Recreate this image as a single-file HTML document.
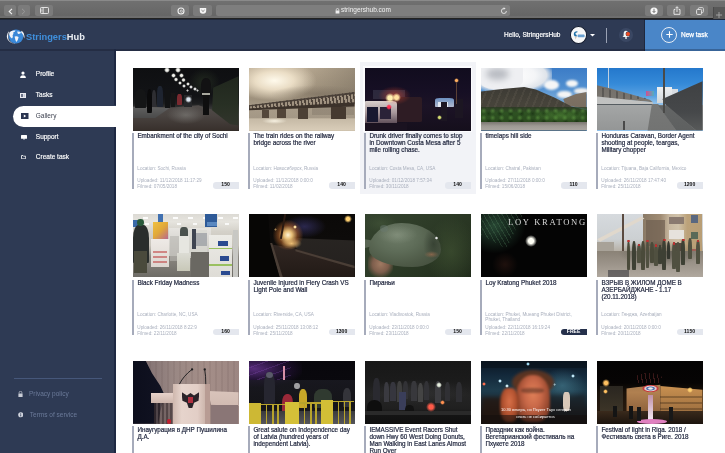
<!DOCTYPE html>
<html><head><meta charset="utf-8"><style>
*{margin:0;padding:0;box-sizing:border-box}
html,body{width:725px;height:453px;overflow:hidden;background:#fff;font-family:"Liberation Sans",sans-serif;position:relative}
div,span{position:absolute}
#tb{will-change:transform;left:0;top:0;width:725px;height:19px;background:linear-gradient(180deg,#707070,#666 85%,#6e6e6e 92%);border-top:1px solid #8a8a8a;border-bottom:1.3px solid #222}
.tbb{background:#7b7b7b;border-radius:2px;height:11px;top:3.9px}
#hdr{will-change:transform;left:0;top:19px;width:725px;height:31.6px;background:#2e3a54;border-top:1px solid #1e273a}
#side{will-change:transform;left:0;top:50px;width:116px;height:403px;background:#2e3a54}
#content{left:116px;top:50.6px;width:609px;height:403px;background:#fff}
.img{width:105.5px;height:63px;background:#333;overflow:hidden}
.hov{width:115.5px;height:131.5px;background:#f2f3f7}
.bl{width:1.6px;height:55.5px;background:#a6abbb}
.ti{width:110px;white-space:nowrap;font-weight:normal;font-size:6.3px;line-height:7px;color:#22283f;-webkit-text-stroke:0.2px #22283f}
.lo{width:110px;white-space:nowrap;font-size:4.65px;line-height:4.7px;color:#a9afbd}
.up{width:80px;font-size:4.65px;line-height:5.5px;color:#a9afbd}
.bd{width:26px;height:6.5px;background:#e4e7ee;border-radius:3.2px 0 0 3.2px;font-size:5.1px;line-height:5.6px;font-weight:bold;text-align:center;color:#111;padding-left:0}
.bd.free{background:#25304b;color:#fff}
.mi{left:35.8px;font-size:6.5px;color:#fff;line-height:8px;-webkit-text-stroke:0.15px currentColor}
#cards{left:0;top:0;width:725px;height:453px;will-change:transform}

</style></head><body>
<div id="tb">
 <div class="tbb" style="left:4.1px;width:12px"></div>
 <svg style="position:absolute;left:8px;top:6.5px" width="5" height="7" viewBox="0 0 5 7"><path d="M4 0.8 L1.2 3.5 L4 6.2" fill="none" stroke="#f4f4f4" stroke-width="1.1"/></svg>
 <div class="tbb" style="left:17.6px;width:12px"></div>
 <svg style="position:absolute;left:21.3px;top:6.5px" width="5" height="7" viewBox="0 0 5 7"><path d="M1 0.8 L3.8 3.5 L1 6.2" fill="none" stroke="#9a9a9a" stroke-width="1"/></svg>
 <div class="tbb" style="left:34.9px;width:18px"></div>
 <svg style="position:absolute;left:39.5px;top:6.3px" width="9" height="7" viewBox="0 0 9 7"><rect x="0.5" y="0.5" width="8" height="6" rx="0.8" fill="none" stroke="#eee" stroke-width="0.9"/><line x1="3.2" y1="0.5" x2="3.2" y2="6.5" stroke="#eee" stroke-width="0.8"/><line x1="1" y1="2.2" x2="2.8" y2="2.2" stroke="#ddd" stroke-width="0.5"/><line x1="1" y1="3.5" x2="2.8" y2="3.5" stroke="#ddd" stroke-width="0.5"/><line x1="1" y1="4.8" x2="2.8" y2="4.8" stroke="#ddd" stroke-width="0.5"/></svg>
 <div class="tbb" style="left:170.7px;width:18.5px"></div>
 <svg style="position:absolute;left:176.5px;top:6px" width="8" height="8" viewBox="0 0 8 8"><circle cx="4" cy="4" r="3" fill="none" stroke="#f0f0f0" stroke-width="1.1"/><circle cx="4.3" cy="4.2" r="1.1" fill="none" stroke="#f0f0f0" stroke-width="0.7"/></svg>
 <div class="tbb" style="left:193.1px;width:18.8px"></div>
 <svg style="position:absolute;left:198.5px;top:6px" width="8" height="8" viewBox="0 0 8 8"><path d="M0.8 1 H7.2 V3.5 A3.2 3.2 0 0 1 0.8 3.5 Z" fill="#f4f4f4"/><path d="M2.4 3 L4 4.5 L5.6 3" fill="none" stroke="#7b7b7b" stroke-width="0.9"/></svg>
 <div class="tbb" style="left:216px;width:294px;background:#7e7e7e"></div>
 <svg style="position:absolute;left:334.5px;top:6.5px" width="5" height="6" viewBox="0 0 5 6"><path d="M1.2 2.6 V1.8 A1.3 1.3 0 0 1 3.8 1.8 V2.6" fill="none" stroke="#eee" stroke-width="0.7"/><rect x="0.6" y="2.5" width="3.8" height="3" fill="#eee"/></svg>
 <div style="left:341px;top:2.8px;font-size:6.5px;line-height:11px;color:#f2f2f2">stringershub.com</div>
 <svg style="position:absolute;left:500px;top:5.8px" width="8" height="8" viewBox="0 0 8 8"><path d="M6.4 4 A2.5 2.5 0 1 1 4 1.5" fill="none" stroke="#e8e8e8" stroke-width="0.9"/><path d="M3.6 0.2 L5.6 1.5 L3.6 2.8 Z" fill="#e8e8e8"/></svg>
 <div class="tbb" style="left:644.5px;width:18.5px"></div>
 <svg style="position:absolute;left:649.8px;top:5.8px" width="8" height="8" viewBox="0 0 8 8"><circle cx="4" cy="4" r="3.6" fill="#f6f6f6"/><path d="M4 1.8 V5.2 M2.6 4 L4 5.6 L5.4 4" fill="none" stroke="#6a6a6a" stroke-width="0.9"/></svg>
 <div class="tbb" style="left:667.2px;width:18.3px"></div>
 <svg style="position:absolute;left:672.5px;top:5px" width="8" height="9" viewBox="0 0 8 9"><path d="M2.3 3.5 H1 V8.3 H7 V3.5 H5.7" fill="none" stroke="#eee" stroke-width="0.9"/><path d="M4 6 V0.8 M2.4 2.3 L4 0.7 L5.6 2.3" fill="none" stroke="#eee" stroke-width="0.9"/></svg>
 <div class="tbb" style="left:690.2px;width:18px"></div>
 <svg style="position:absolute;left:695.5px;top:5.8px" width="8" height="8" viewBox="0 0 8 8"><rect x="2.4" y="0.6" width="5" height="5" rx="1" fill="none" stroke="#ddd" stroke-width="0.9"/><rect x="0.6" y="2.4" width="5" height="5" rx="1" fill="#7b7b7b" stroke="#eee" stroke-width="0.9"/></svg>
 <div style="left:712.7px;top:5.7px;width:13px;height:12.5px;background:#585858;border-left:1px solid #4a4a4a"></div>
 <svg style="position:absolute;left:716px;top:10.5px" width="6" height="6" viewBox="0 0 6 6"><path d="M3 0 V6 M0 3 H6" stroke="#a8a8a8" stroke-width="0.9"/></svg>
</div>
<div id="hdr">
 <svg style="position:absolute;left:5.5px;top:8.6px" width="19" height="15" viewBox="0 0 19 15">
  <ellipse cx="10" cy="7.5" rx="7.3" ry="6.9" fill="#3a88d8"/>
  <path d="M3.5 3.2 Q6 0.8 9.5 1.6 Q9 3.2 7.2 3.6 Q8 5 6.6 6.2 Q7.4 8 6 9.6 Q4.2 8.6 3.6 6.6 Q2.8 4.8 3.5 3.2 Z" fill="#f2f4f8"/>
  <path d="M8.6 7.6 Q10.8 6.6 12.6 8 Q12.2 11 10.4 13 Q9.2 11.6 8.6 7.6 Z" fill="#f2f4f8"/>
  <path d="M11.2 2.6 Q13.6 2.2 15.2 3.8 Q13.6 5.4 11.8 4.8 Z" fill="#f2f4f8"/>
  <path d="M1.6 10.5 Q-0.6 5.5 3.2 2 Q1.6 6 2.6 10.8 Q5 14.2 9.5 14.6 Q4.6 15 1.6 10.5 Z" fill="#f2f4f8"/>
  <path d="M15.8 1.8 Q19.4 4.6 18.2 9.6 Q17.8 5.8 15 3 Z" fill="#f2f4f8"/>
 </svg>
 <div style="left:26px;top:10.5px;font-size:9.3px;font-weight:bold;line-height:12px;color:#3f8fdc">Stringers<span style="position:static;color:#e9edf2">Hub</span></div>
 <div style="left:504px;top:10.5px;font-size:6.5px;line-height:8px;color:#fff;-webkit-text-stroke:0.2px #fff">Hello, StringersHub</div>
 <div style="left:569.9px;top:6.4px;width:16.8px;height:17.2px;border-radius:50%;background:#f8f8f8;border:1.6px solid #141c2e"></div>
 <svg style="position:absolute;left:572px;top:9.5px" width="13" height="11" viewBox="0 0 13 11"><path d="M5.5 1.2 Q2 1 1.8 4 Q1.8 6.5 4.5 6.8 L4.8 5 Q3.3 4.8 3.4 3.6 Q3.6 2.4 5.2 2.6 Z" fill="#1f70a8"/><path d="M2.5 6.5 L4.8 6.8 L3.6 9.5 Z" fill="#d8c8b8"/><rect x="5.6" y="4.6" width="7" height="2.6" rx="0.8" fill="#6aa0d0"/></svg>
 <svg style="position:absolute;left:589.8px;top:14.20px" width="5" height="3" viewBox="0 0 5 3"><path d="M0 0 H5 L2.5 2.5 Z" fill="#fff"/></svg>
 <div style="left:605.7px;top:7.60px;width:1.2px;height:15px;background:#9aa2b4"></div>
 <div style="left:618.8px;top:7.70px;width:14.5px;height:14.5px;border-radius:50%;background:#3a4763"></div>
 <svg style="position:absolute;left:621.8px;top:10.30px" width="8" height="9" viewBox="0 0 8 9"><path d="M4 0.8 Q6.3 0.8 6.3 3.5 L6.5 6 L7.5 7 H0.5 L1.5 6 L1.7 3.5 Q1.7 0.8 4 0.8 Z" fill="#f4f4f4"/><circle cx="4" cy="8" r="0.9" fill="#f4f4f4"/></svg>
 <div style="left:626.1px;top:11.7px;width:4.1px;height:4.1px;border-radius:50%;background:#ee4a22;box-shadow:0 0 0 0.4px #2e3a54"></div>
 <div style="left:645.4px;top:0px;width:80px;height:31.6px;background:#4a86c8"></div>
 <div style="left:661px;top:6.70px;width:16px;height:16px;border-radius:50%;border:1px solid #e8eef6"></div>
 <svg style="position:absolute;left:665.5px;top:11.20px" width="7" height="7" viewBox="0 0 7 7"><path d="M3.5 0.3 V6.7 M0.3 3.5 H6.7" stroke="#fff" stroke-width="1.1"/></svg>
 <div style="left:681px;top:11.2px;font-size:6.5px;line-height:8px;color:#fff;-webkit-text-stroke:0.25px #fff">New task</div>
</div>
<div id="side">
 <div style="left:13.4px;top:55.6px;width:103px;height:21px;background:#fff;border-radius:10.5px 0 0 10.5px"></div>
 <svg style="position:absolute;left:20.3px;top:20.8px" width="6" height="7" viewBox="0 0 6 7"><circle cx="3" cy="2.1" r="1.6" fill="#fff"/><path d="M0.2 7 V6 Q0.5 4.2 3 4.2 Q5.5 4.2 5.8 6 V7 Z" fill="#fff"/></svg>
 <svg style="position:absolute;left:20px;top:43px" width="6" height="5" viewBox="0 0 6 5"><rect x="0" y="0" width="6" height="5" fill="#e8e8ee"/><rect x="1" y="1" width="2" height="3" fill="#6a7288"/><rect x="3.6" y="1" width="1.4" height="3" fill="#c8ccd6"/></svg>
 <div class="mi" style="top:20px">Profile</div>
 <div class="mi" style="top:41px">Tasks</div>
 <svg style="position:absolute;left:20.9px;top:62.9px" width="8" height="6" viewBox="0 0 8 6"><rect x="0" y="0" width="7.5" height="6" fill="#2a3450"/><path d="M2.8 1.6 L5.2 3 L2.8 4.4 Z" fill="#fff"/></svg>
 <div class="mi" style="top:62px;color:#3a3f4d;-webkit-text-stroke:0">Gallery</div>
 <svg style="position:absolute;left:20.5px;top:84.6px" width="6" height="5" viewBox="0 0 6 5"><rect x="0" y="0" width="6" height="3.8" rx="0.5" fill="#fff"/><path d="M2 3.5 L3 5 L4 3.5 Z" fill="#fff"/></svg>
 <div class="mi" style="top:82.6px">Support</div>
 <svg style="position:absolute;left:20.9px;top:105.2px" width="5" height="4" viewBox="0 0 5 4"><path d="M0.5 0.5 L2 0.5 L2.5 1.2 H4.6 V3.8 H0.5 Z" fill="none" stroke="#fff" stroke-width="0.8"/></svg>
 <div class="mi" style="top:103.4px">Create task</div>
 <div style="left:13.6px;top:327.5px;width:88.7px;height:1px;background:#46577a"></div>
 <svg style="position:absolute;left:17.9px;top:341.3px" width="5" height="6" viewBox="0 0 5 6"><path d="M1.1 2.6 V1.7 A1.4 1.4 0 0 1 3.9 1.7 V2.6" fill="none" stroke="#c8ccd6" stroke-width="0.7"/><rect x="0.4" y="2.5" width="4.2" height="3.4" rx="0.5" fill="#c8ccd6"/></svg>
 <div style="left:29px;top:340px;font-size:6.5px;line-height:8px;color:#6b7a99">Privacy policy</div>
 <svg style="position:absolute;left:17.9px;top:362px" width="5.5" height="5.5" viewBox="0 0 6 6"><circle cx="3" cy="3" r="2.8" fill="#d0d4de"/><rect x="2.55" y="2.5" width="0.9" height="2.3" fill="#2e3a54"/><circle cx="3" cy="1.6" r="0.5" fill="#2e3a54"/></svg>
 <div style="left:29.8px;top:361px;font-size:6.5px;line-height:8px;color:#6b7a99">Terms of service</div>
</div>
<div id="content"></div>
<div style="left:0;top:48.6px;width:725px;height:2px;background:rgba(10,15,30,.28)"></div>
<div style="left:644.4px;top:19px;width:1px;height:31.6px;background:rgba(10,15,30,.4)"></div>
<div style="left:114.1px;top:49.3px;width:1.9px;height:56px;background:#1e2842"></div>
<div style="left:114.1px;top:127px;width:1.9px;height:326px;background:#1e2842"></div>

<div id="cards">
<div class="img" style="left:133px;top:67.5px;background:linear-gradient(180deg,#0e0f11 0%,#121316 45%,#1c1d1e 56%,#333 63%,#484746 74%,#403c3a 88%,#2e2926 100%)"><div style="left:52%;top:0%;width:30%;height:45%;background:radial-gradient(ellipse,rgba(40,50,35,.7),transparent 70%);"></div><div style="left:0;top:0;width:100%;height:100%;background:linear-gradient(180deg,#555555 0%,#5c5a58 35%,#4a4441 75%,#372f2b 100%);clip-path:polygon(0% 62%,35% 64%,62% 60%,100% 80%,100% 100%,0% 100%);"></div><div style="left:0%;top:62%;width:35%;height:18%;background:linear-gradient(180deg,#606060,#4a4a4a);clip-path:polygon(0% 0%,100% 10%,60% 100%,0% 100%)"></div><div style="left:30%;top:60%;width:40%;height:32%;background:radial-gradient(ellipse,rgba(150,150,146,.45),transparent 65%);"></div><div style="left:0;top:0;width:100%;height:100%;background:linear-gradient(180deg,#1e241c,#283024 60%,#34362e);clip-path:polygon(76% 32%,100% 14%,100% 92%,92% 90%,75% 68%);"></div><div style="left:2%;top:34%;width:10%;height:30%;background:#141516;border-radius:40% 40% 5% 5%"></div><div style="left:13%;top:34%;width:5%;height:38%;background:#0a0a0b;border-radius:40% 40% 10% 10%"></div><div style="left:18%;top:36%;width:4%;height:26%;background:#2e2e32;border-radius:40% 40% 10% 10%"></div><div style="left:23%;top:30%;width:5%;height:32%;background:#1e2430;border-radius:40% 40% 10% 10%"></div><div style="left:30%;top:36%;width:5%;height:28%;background:#121314;"></div><div style="left:36%;top:40%;width:4%;height:22%;background:#161616;"></div><div style="left:42%;top:42%;width:4%;height:18%;background:#7a2a30;border-radius:40% 40% 10% 10%"></div><div style="left:48%;top:44%;width:8%;height:18%;background:#262729;"></div><div style="left:calc(53% - 3.5px);top:calc(50% - 3.5px);width:7.0px;height:7.0px;border-radius:50%;background:radial-gradient(circle,#dce6f0 0,#dce6f0 30%,transparent 70%);"></div><div style="left:64%;top:17%;width:10%;height:28%;background:#121213;border-radius:40% 40% 5% 5%"></div><div style="left:65%;top:40%;width:8%;height:3.5%;background:#a8a89e;"></div><div style="left:66%;top:43%;width:6%;height:33%;background:#0f0f0f;"></div><div style="left:calc(32% - 3px);top:calc(4% - 3px);width:6px;height:6px;border-radius:50%;background:radial-gradient(circle,#f6f6f0 0,#f6f6f0 30%,transparent 70%);"></div><div style="left:calc(43% - 3px);top:calc(4% - 3px);width:6px;height:6px;border-radius:50%;background:radial-gradient(circle,#f6f6f0 0,#f6f6f0 30%,transparent 70%);"></div><div style="left:calc(38% - 2.5px);top:calc(12% - 2.5px);width:5.0px;height:5.0px;border-radius:50%;background:radial-gradient(circle,#f0f0ea 0,#f0f0ea 30%,transparent 70%);"></div><div style="left:calc(46% - 2.5px);top:calc(12% - 2.5px);width:5.0px;height:5.0px;border-radius:50%;background:radial-gradient(circle,#f0f0ea 0,#f0f0ea 30%,transparent 70%);"></div><div style="left:calc(41% - 2.2px);top:calc(19% - 2.2px);width:4.4px;height:4.4px;border-radius:50%;background:radial-gradient(circle,#ecece6 0,#ecece6 30%,transparent 70%);"></div><div style="left:calc(48% - 2.2px);top:calc(20% - 2.2px);width:4.4px;height:4.4px;border-radius:50%;background:radial-gradient(circle,#ecece6 0,#ecece6 30%,transparent 70%);"></div><div style="left:calc(45% - 2px);top:calc(25% - 2px);width:4px;height:4px;border-radius:50%;background:radial-gradient(circle,#e6e6e2 0,#e6e6e2 30%,transparent 70%);"></div><div style="left:calc(52% - 2px);top:calc(26% - 2px);width:4px;height:4px;border-radius:50%;background:radial-gradient(circle,#e6e6e2 0,#e6e6e2 30%,transparent 70%);"></div><div style="left:calc(48% - 2px);top:calc(30% - 2px);width:4px;height:4px;border-radius:50%;background:radial-gradient(circle,#ddd 0,#ddd 30%,transparent 70%);"></div><div style="left:calc(55% - 2px);top:calc(31% - 2px);width:4px;height:4px;border-radius:50%;background:radial-gradient(circle,#ddd 0,#ddd 30%,transparent 70%);"></div><div style="left:calc(59% - 1.8px);top:calc(34% - 1.8px);width:3.6px;height:3.6px;border-radius:50%;background:radial-gradient(circle,#ddd 0,#ddd 30%,transparent 70%);"></div><div style="left:calc(52% - 1.6px);top:calc(37% - 1.6px);width:3.2px;height:3.2px;border-radius:50%;background:radial-gradient(circle,#ccc 0,#ccc 30%,transparent 70%);"></div><div style="left:calc(61% - 1.6px);top:calc(36% - 1.6px);width:3.2px;height:3.2px;border-radius:50%;background:radial-gradient(circle,#ccc 0,#ccc 30%,transparent 70%);"></div></div>
<div class="bl" style="left:132.2px;top:133.0px"></div>
<div class="ti" style="left:137.4px;top:132.35px">Embankment of the city of Sochi</div>
<div class="lo" style="left:137.3px;top:166.5px">Location: Sochi, Russia</div>
<div class="up" style="left:137.3px;top:178.4px">Uploaded: 11/12/2018 11:17:29</div>
<div class="up" style="left:137.3px;top:183.9px">Filmed: 07/05/2018</div>
<div class="bd" style="left:212.6px;top:182.0px">150</div>
<div class="img" style="left:249px;top:67.5px;background:linear-gradient(180deg,#b8a992 0%,#a89a84 30%,#9e917d 50%,#a89b88 62%,#b8ac98 78%,#cfc3ae 100%)"><div style="left:0%;top:0%;width:100%;height:100%;background:radial-gradient(ellipse 40% 32% at 24% 20%,rgba(255,250,236,1) 0,rgba(245,232,208,.85) 45%,transparent 100%);"></div><div style="left:0%;top:0%;width:100%;height:60%;background:linear-gradient(90deg,transparent 50%,rgba(80,72,62,.3) 100%);"></div><div style="left:20%;top:28%;width:90%;height:28%;background:radial-gradient(ellipse,rgba(110,98,84,.45),transparent 70%);"></div><div style="left:60%;top:60%;width:40%;height:16%;background:linear-gradient(180deg,transparent,rgba(110,100,88,.6) 40%,rgba(120,110,96,.5));"></div><div style="left:0%;top:64%;width:100%;height:16%;background:linear-gradient(180deg,#a89c8a,#8e8272);opacity:.5"></div><div style="left:0;top:0;width:100%;height:100%;background:repeating-linear-gradient(80deg,#4e433a 0,#4e433a 1.5px,#a09280 1.5px,#a09280 3.5px);clip-path:polygon(0% 60%,100% 39%,100% 60%,0% 67%);"></div><div style="left:0;top:0;width:100%;height:100%;background:#4a4038;clip-path:polygon(0% 60%,100% 39%,100% 42%,0% 62%);"></div><div style="left:0;top:0;width:100%;height:100%;background:#3c322a;clip-path:polygon(0% 65%,100% 55%,100% 62%,0% 68%);"></div><div style="left:12%;top:67%;width:7%;height:13%;background:#54473a;"></div><div style="left:27%;top:66%;width:8%;height:14%;background:#524539;"></div><div style="left:46%;top:64%;width:10%;height:19%;background:#4c4035;"></div><div style="left:78%;top:62%;width:14%;height:25%;background:#463a30;"></div><div style="left:0%;top:82%;width:100%;height:18%;background:linear-gradient(180deg,#c6baa6,#d8ccb8);"></div><div style="left:12%;top:80%;width:24%;height:9%;background:radial-gradient(ellipse,rgba(255,250,235,.85),transparent 70%);"></div></div>
<div class="bl" style="left:248.2px;top:133.0px"></div>
<div class="ti" style="left:253.4px;top:132.35px">The train rides on the railway<br>bridge across the river</div>
<div class="lo" style="left:253.3px;top:166.5px">Location: Новосибирск, Russia</div>
<div class="up" style="left:253.3px;top:178.4px">Uploaded: 11/12/2018 0:00:0</div>
<div class="up" style="left:253.3px;top:183.9px">Filmed: 11/02/2018</div>
<div class="bd" style="left:328.6px;top:182.0px">140</div>
<div class="hov" style="left:360px;top:62.3px"></div>
<div style="left:363.2px;top:65.7px;width:109.1px;height:66.6px;background:#fbfbfd"></div>
<div class="img" style="left:365px;top:67.5px;background:linear-gradient(180deg,#110c1e 0%,#160f24 35%,#1c1326 60%,#150f1c 100%)"><div style="left:8%;top:36%;width:30%;height:14%;background:#403e52;opacity:.55"></div><div style="left:26%;top:47%;width:28%;height:40%;background:#2e1c24;border-radius:6%"></div><div style="left:0%;top:53%;width:30%;height:37%;background:linear-gradient(180deg,#d8cfcc,#a8989c 50%,#5a4a55);border-radius:3% 14% 0 0"></div><div style="left:2%;top:62%;width:10%;height:24%;background:#181830;"></div><div style="left:14%;top:62%;width:11%;height:20%;background:#2a2238;"></div><div style="left:0%;top:88%;width:40%;height:12%;background:#1a1220;"></div><div style="left:12%;top:30%;width:32%;height:30%;background:radial-gradient(ellipse,rgba(255,80,50,.5),transparent 70%);"></div><div style="left:calc(24% - 5px);top:calc(48% - 5px);width:10px;height:10px;border-radius:50%;background:radial-gradient(circle,#fff0b0 0,#fff0b0 30%,transparent 70%);"></div><div style="left:calc(30% - 4.5px);top:calc(48% - 4.5px);width:9.0px;height:9.0px;border-radius:50%;background:radial-gradient(circle,#ffe0a0 0,#ffe0a0 30%,transparent 70%);"></div><div style="left:calc(23% - 3px);top:calc(62% - 3px);width:6px;height:6px;border-radius:50%;background:radial-gradient(circle,#ff3050 0,#ff3050 30%,transparent 70%);"></div><div style="left:66%;top:48%;width:18%;height:15%;background:linear-gradient(180deg,#80b0e8,#d8e4f8);border-radius:25% 25% 5% 5%;opacity:.8"></div><div style="left:69%;top:54%;width:10%;height:9%;background:#f0f4fa;opacity:.85"></div><div style="left:72%;top:55%;width:6%;height:30%;background:#1c1622;"></div><div style="left:85%;top:50%;width:8%;height:30%;background:#1c1622;"></div><div style="left:calc(87% - 2.5px);top:calc(21% - 2.5px);width:5.0px;height:5.0px;border-radius:50%;background:radial-gradient(circle,#ffb060 0,#ffb060 30%,transparent 70%);"></div><div style="left:86.6%;top:23%;width:1%;height:35%;background:#5a4035;"></div><div style="left:calc(71% - 2.5px);top:calc(80% - 2.5px);width:5.0px;height:5.0px;border-radius:50%;background:radial-gradient(circle,#d0d870 0,#d0d870 30%,transparent 70%);"></div></div>
<div class="bl" style="left:364.2px;top:133.0px"></div>
<div class="ti" style="left:369.4px;top:132.35px">Drunk driver finally comes to stop<br>in Downtown Costa Mesa after 5<br>mile rolling chase.</div>
<div class="lo" style="left:369.3px;top:166.5px">Location: Costa Mesa, CA, USA</div>
<div class="up" style="left:369.3px;top:178.4px">Uploaded: 01/12/2018 7:57:34</div>
<div class="up" style="left:369.3px;top:183.9px">Filmed: 30/11/2018</div>
<div class="bd" style="left:444.6px;top:182.0px">140</div>
<div class="img" style="left:481px;top:67.5px;background:linear-gradient(180deg,#3c7cc6 0%,#4f8ed0 30%,#6ea4d8 45%)"><div style="left:-5%;top:-10%;width:72%;height:50%;background:radial-gradient(ellipse 60% 60% at 45% 45%,#ffffff 0,#f4f5f7 55%,#dfe4ea 80%,transparent 100%);"></div><div style="left:0%;top:0%;width:40%;height:34%;background:#eeeff2;border-radius:0 0 40% 30%"></div><div style="left:5%;top:0%;width:22%;height:20%;background:#8e939c;border-radius:50%;filter:blur(3px);opacity:.55"></div><div style="left:60%;top:20%;width:14%;height:15%;background:#f6f6f6;border-radius:50%;filter:blur(1.2px)"></div><div style="left:81%;top:20%;width:11%;height:11%;background:#f6f6f6;border-radius:50%;filter:blur(1.2px)"></div><div style="left:72%;top:37%;width:14%;height:12%;background:#f4f4f4;border-radius:50%;filter:blur(1.2px)"></div><div style="left:88%;top:33%;width:14%;height:9%;background:#eee;border-radius:50%;filter:blur(1.2px)"></div><div style="left:0;top:0;width:100%;height:100%;background:linear-gradient(180deg,#8a7c6e,#6e6458);clip-path:polygon(78% 50%,90% 42%,100% 39%,100% 66%,80% 60%);"></div><div style="left:0;top:0;width:100%;height:100%;background:linear-gradient(180deg,#34332e,#3c3a34 30%,#46433a 55%);clip-path:polygon(0% 38%,20% 34%,41% 31%,52% 35%,70% 48%,86% 62%,100% 68%,100% 100%,0% 100%);"></div><div style="left:0%;top:33%;width:100%;height:36%;background:repeating-linear-gradient(112deg,transparent 0,transparent 5px,rgba(140,130,115,.13) 5px,rgba(140,130,115,.13) 7px);clip-path:polygon(0% 12%,41% 0%,72% 45%,100% 95%,100% 100%,0% 100%)"></div><div style="left:0%;top:62%;width:100%;height:28%;background:linear-gradient(180deg,rgba(30,52,24,.6),#2e5222 35%,#2a4a1e 80%);"></div><div style="left:0%;top:64%;width:100%;height:24%;background:radial-gradient(circle at 30% 40%,rgba(100,160,70,.55) 0,transparent 3px) 0 0/9px 7px,radial-gradient(circle at 70% 70%,rgba(20,40,15,.6) 0,transparent 3px) 0 0/11px 8px;"></div><div style="left:50%;top:66%;width:50%;height:20%;background:radial-gradient(ellipse,rgba(90,150,60,.45),transparent 70%);"></div><div style="left:0%;top:86%;width:100%;height:14%;background:linear-gradient(180deg,#7a7670,#9e9a94 50%,#aaa6a0);"></div></div>
<div class="bl" style="left:480.2px;top:133.0px"></div>
<div class="ti" style="left:485.4px;top:132.35px">timelaps hill side</div>
<div class="lo" style="left:485.3px;top:166.5px">Location: Chatral, Pakistan</div>
<div class="up" style="left:485.3px;top:178.4px">Uploaded: 27/11/2018 0:00:0</div>
<div class="up" style="left:485.3px;top:183.9px">Filmed: 15/06/2018</div>
<div class="bd" style="left:560.6px;top:182.0px">110</div>
<div class="img" style="left:597px;top:67.5px;background:linear-gradient(180deg,#2478cc 0%,#358ad8 25%,#5aa2e2 45%,#8fc0ea 56%)"><div style="left:10%;top:0%;width:1%;height:34%;background:#c0d0e0;"></div><div style="left:57%;top:31%;width:14%;height:26%;background:linear-gradient(180deg,#eef0f2,#cfd5da);"></div><div style="left:71%;top:34%;width:6%;height:18%;background:#d8dde2;"></div><div style="left:46%;top:37%;width:8%;height:8%;background:linear-gradient(90deg,#d05090,#50b0c0);"></div><div style="left:0;top:0;width:100%;height:100%;background:linear-gradient(180deg,#6a6660,#8a8680);clip-path:polygon(0% 28%,12% 33%,50% 51%,53% 55%,0% 48%);"></div><div style="left:0%;top:30%;width:50%;height:20%;background:repeating-linear-gradient(90deg,transparent 0,transparent 5px,rgba(40,40,40,.35) 5px,rgba(40,40,40,.35) 7px);clip-path:polygon(0% 0%,100% 100%,0% 100%)"></div><div style="left:0;top:0;width:100%;height:100%;background:linear-gradient(180deg,#b8b9b8,#c8c9c8);clip-path:polygon(0% 46%,53% 55%,53% 58%,0% 59%);"></div><div style="left:0%;top:58%;width:53%;height:1.8%;background:#3a3a3a;opacity:.75"></div><div style="left:0%;top:59%;width:100%;height:41%;background:linear-gradient(180deg,#a4a6a6,#9c9e9e 50%,#949696);"></div><div style="left:0;top:0;width:100%;height:100%;background:linear-gradient(180deg,#7e7f7e,#727372);clip-path:polygon(52% 58%,58% 58%,75% 100%,48% 100%);"></div><div style="left:0;top:0;width:100%;height:100%;background:linear-gradient(180deg,#3c3e40,#46484a 70%,#585a5a);clip-path:polygon(62% 50%,100% 22%,100% 100%,94% 100%,66% 62%);"></div><div style="left:0;top:0;width:100%;height:100%;background:linear-gradient(180deg,#6a6c6c,#5e6060);clip-path:polygon(58% 60%,66% 60%,94% 100%,75% 100%);"></div><div style="left:63%;top:0%;width:1.4%;height:72%;background:#4a4a48;"></div><div style="left:25%;top:85%;width:1.2%;height:15%;background:#4a4a4a;"></div></div>
<div class="bl" style="left:596.2px;top:133.0px"></div>
<div class="ti" style="left:601.4px;top:132.35px">Honduras Caravan, Border Agent<br>shooting at people, teargas,<br>Military chopper</div>
<div class="lo" style="left:601.3px;top:166.5px">Location: Tijuana, Baja California, Mexico</div>
<div class="up" style="left:601.3px;top:178.4px">Uploaded: 26/11/2018 17:47:40</div>
<div class="up" style="left:601.3px;top:183.9px">Filmed: 25/11/2018</div>
<div class="bd" style="left:676.6px;top:182.0px">1200</div>
<div class="img" style="left:133px;top:214.1px;background:linear-gradient(180deg,#dcdad4 0%,#e6e4de 12%,#d4d1c9 28%,#c8c4bb 50%,#8a8780 68%,#6e6c66 100%)"><div style="left:0%;top:4%;width:100%;height:4%;background:repeating-linear-gradient(90deg,transparent 0,transparent 10px,rgba(255,255,255,.9) 10px,rgba(255,255,255,.9) 15px);"></div><div style="left:0%;top:14%;width:100%;height:3%;background:repeating-linear-gradient(90deg,transparent 0,transparent 12px,rgba(255,255,255,.8) 12px,rgba(255,255,255,.8) 16px);"></div><div style="left:68%;top:0%;width:12%;height:20%;background:#2e5a98;"></div><div style="left:70%;top:13%;width:10%;height:6%;background:#5a88c0;"></div><div style="left:24%;top:0%;width:4%;height:13%;background:#4070b0;"></div><div style="left:0%;top:10%;width:8%;height:10%;background:#3a6aa8;"></div><div style="left:34%;top:22%;width:40%;height:45%;background:linear-gradient(180deg,#e6e4e0,#c8c6c0);"></div><div style="left:48%;top:25%;width:22%;height:45%;background:#d8d8d2;opacity:.7"></div><div style="left:19%;top:12%;width:14%;height:28%;background:linear-gradient(135deg,#f0c040,#e0a838 50%,#b86890);"></div><div style="left:17%;top:40%;width:17%;height:44%;background:linear-gradient(180deg,#eeeae6,#dcd6d0);"></div><div style="left:19%;top:54%;width:13%;height:26%;background:repeating-linear-gradient(180deg,transparent 0,transparent 3px,rgba(190,60,60,.55) 3px,rgba(190,60,60,.55) 5px);"></div><div style="left:35%;top:35%;width:10%;height:40%;background:#b8b6b0;opacity:.6"></div><div style="left:0%;top:18%;width:15%;height:60%;background:#2a2e2c;border-radius:35% 35% 5% 5%"></div><div style="left:1%;top:58%;width:12%;height:35%;background:#4a4a3c;"></div><div style="left:4%;top:8%;width:6%;height:11%;background:#2a5a3a;border-radius:50%"></div><div style="left:45%;top:20%;width:7%;height:16%;background:#4a524e;border-radius:40% 40% 5% 5%"></div><div style="left:44%;top:34%;width:9%;height:30%;background:#e6e6e0;"></div><div style="left:42%;top:62%;width:12%;height:28%;background:linear-gradient(180deg,#dcdcd4,#c8c8b8);"></div><div style="left:56%;top:24%;width:4%;height:32%;background:#3e4450;"></div><div style="left:60%;top:30%;width:10%;height:20%;background:#8a9098;opacity:.6"></div><div style="left:55%;top:60%;width:17%;height:40%;background:#6a6862;"></div><div style="left:72%;top:33%;width:22%;height:67%;background:linear-gradient(180deg,#ecebe6,#dedcd6);"></div><div style="left:95%;top:25%;width:5%;height:75%;background:#c8c8c4;"></div><div style="left:81%;top:42%;width:9%;height:8%;background:#2a4a90;"></div><div style="left:82%;top:67%;width:9%;height:8%;background:#2a4a90;"></div><div style="left:83%;top:90%;width:9%;height:7%;background:#2a4a90;"></div><div style="left:72%;top:54%;width:22%;height:2%;background:#9ac060;"></div><div style="left:72%;top:80%;width:22%;height:2%;background:#9ac060;"></div></div>
<div class="bl" style="left:132.2px;top:279.6px"></div>
<div class="ti" style="left:137.4px;top:278.95px">Black Friday Madness</div>
<div class="lo" style="left:137.3px;top:313.1px">Location: Charlotte, NC, USA</div>
<div class="up" style="left:137.3px;top:325.0px">Uploaded: 26/11/2018 8:22:9</div>
<div class="up" style="left:137.3px;top:330.5px">Filmed: 22/11/2018</div>
<div class="bd" style="left:212.6px;top:328.6px">160</div>
<div class="img" style="left:249px;top:214.1px;background:linear-gradient(180deg,#0b0908 0%,#0d0b0a 40%,#13100e 60%,#17120f 100%)"><div style="left:30%;top:0%;width:45%;height:40%;background:radial-gradient(ellipse,rgba(80,75,160,.45),transparent 65%);"></div><div style="left:0;top:0;width:100%;height:100%;background:linear-gradient(180deg,#2a2724,#24201e);clip-path:polygon(42% 38%,100% 42%,100% 85%,62% 72%,45% 55%);"></div><div style="left:0;top:0;width:100%;height:100%;background:linear-gradient(180deg,#3a2e28,#2e2420 60%,#221a16);clip-path:polygon(20% 48%,45% 55%,100% 84%,100% 100%,30% 100%);"></div><div style="left:0;top:0;width:100%;height:100%;background:#4a3e36;clip-path:polygon(44% 56%,100% 82%,100% 86%,44% 59%);"></div><div style="left:0;top:0;width:100%;height:100%;background:#4a3e36;clip-path:polygon(19% 46%,22% 46%,32% 100%,29% 100%);"></div><div style="left:22%;top:8%;width:30%;height:50%;background:radial-gradient(ellipse,rgba(255,245,215,1) 0,rgba(255,210,130,.9) 18%,rgba(220,120,50,.45) 42%,transparent 68%);"></div><div style="left:30%;top:38%;width:20%;height:18%;background:radial-gradient(ellipse,rgba(255,210,130,.85),transparent 70%);"></div><div style="left:calc(94% - 4px);top:calc(8% - 4px);width:8px;height:8px;border-radius:50%;background:radial-gradient(circle,#ffd070 0,#ffd070 30%,transparent 70%);"></div><div style="left:calc(44% - 2px);top:calc(21% - 2px);width:4px;height:4px;border-radius:50%;background:radial-gradient(circle,#ffe0a0 0,#ffe0a0 30%,transparent 70%);"></div><div style="left:calc(8% - 1.5px);top:calc(17% - 1.5px);width:3.0px;height:3.0px;border-radius:50%;background:radial-gradient(circle,#c8a060 0,#c8a060 30%,transparent 70%);"></div><div style="left:calc(25% - 1.5px);top:calc(24% - 1.5px);width:3.0px;height:3.0px;border-radius:50%;background:radial-gradient(circle,#a08050 0,#a08050 30%,transparent 70%);"></div><div style="left:31%;top:0%;width:2%;height:40%;background:#2a1a12;transform:rotate(10deg)"></div><div style="left:0;top:0;width:100%;height:100%;background:#070605;clip-path:polygon(0% 0%,18% 0%,20% 46%,29% 100%,0% 100%);"></div></div>
<div class="bl" style="left:248.2px;top:279.6px"></div>
<div class="ti" style="left:253.4px;top:278.95px">Juvenile Injured in Fiery Crash VS<br>Light Pole and Wall</div>
<div class="lo" style="left:253.3px;top:313.1px">Location: Riverside, CA, USA</div>
<div class="up" style="left:253.3px;top:325.0px">Uploaded: 25/11/2018 13:08:12</div>
<div class="up" style="left:253.3px;top:330.5px">Filmed: 25/11/2018</div>
<div class="bd" style="left:328.6px;top:328.6px">1300</div>
<div class="img" style="left:365px;top:214.1px;background:linear-gradient(135deg,#34432e 0%,#2e3c28 40%,#283522 70%,#202b1b 100%)"><div style="left:55%;top:0%;width:45%;height:100%;background:radial-gradient(ellipse at 60% 60%,rgba(75,95,58,.45),transparent 65%);"></div><div style="left:0%;top:0%;width:30%;height:30%;background:radial-gradient(ellipse,rgba(70,90,60,.5),transparent 70%);"></div><div style="left:3%;top:58%;width:24%;height:42%;background:radial-gradient(ellipse at 50% 50%,#a07a62 0,#7e5e4c 45%,transparent 80%);"></div><div style="left:0%;top:36%;width:14%;height:20%;background:#5a6654;clip-path:polygon(0% 20%,100% 40%,100% 60%,0% 90%)"></div><div style="left:4%;top:14%;width:68%;height:70%;background:radial-gradient(ellipse at 40% 30%,#6e7c68 0,#5e6c58 35%,#4e5a47 65%,#404a3a 100%);border-radius:45% 55% 40% 60%/60% 60% 40% 40%"></div><div style="left:55%;top:20%;width:20%;height:55%;background:radial-gradient(ellipse,rgba(40,50,38,.6),transparent 70%);"></div><div style="left:56%;top:58%;width:14%;height:12%;background:radial-gradient(ellipse,rgba(160,110,80,.7),transparent 70%);"></div><div style="left:10%;top:18%;width:40%;height:30%;background:radial-gradient(ellipse,rgba(200,210,190,.2),transparent 70%);"></div><div style="left:14%;top:18%;width:8%;height:10%;background:#6a7a70;border-radius:50%;opacity:.5"></div><div style="left:calc(68% - 1.6px);top:calc(38% - 1.6px);width:3.2px;height:3.2px;border-radius:50%;background:radial-gradient(circle,#e8e8e8 0,#e8e8e8 30%,transparent 70%);"></div></div>
<div class="bl" style="left:364.2px;top:279.6px"></div>
<div class="ti" style="left:369.4px;top:278.95px">Пираньи</div>
<div class="lo" style="left:369.3px;top:313.1px">Location: Vladivostok, Russia</div>
<div class="up" style="left:369.3px;top:325.0px">Uploaded: 23/11/2018 0:00:0</div>
<div class="up" style="left:369.3px;top:330.5px">Filmed: 23/11/2018</div>
<div class="bd" style="left:444.6px;top:328.6px">150</div>
<div class="img" style="left:481px;top:214.1px;background:#040404"><div style="left:0%;top:0%;width:42%;height:62%;background:radial-gradient(ellipse at 30% 30%,rgba(55,100,72,.7) 0,rgba(40,75,55,.4) 40%,transparent 72%);"></div><div style="left:0%;top:0%;width:40%;height:55%;background:repeating-linear-gradient(60deg,transparent 0,transparent 3px,rgba(90,140,100,.25) 3px,rgba(90,140,100,.25) 4px);clip-path:polygon(0% 0%,100% 0%,60% 100%,0% 60%)"></div><div style="left:10%;top:60%;width:25%;height:40%;background:radial-gradient(ellipse,rgba(80,40,30,.35),transparent 70%);"></div><div style="left:25.6%;top:3.5%;width:76%;height:20%;font-family:'Liberation Serif',serif;font-size:8.6px;line-height:12px;color:#d8d8d8;letter-spacing:1.68px;white-space:nowrap">LOY KRATONG</div><div style="left:calc(47% - 6px);top:calc(42% - 6px);width:12px;height:12px;border-radius:50%;background:radial-gradient(circle,rgba(255,255,245,1) 0,rgba(255,255,245,1) 30%,transparent 70%);"></div></div>
<div class="bl" style="left:480.2px;top:279.6px"></div>
<div class="ti" style="left:485.4px;top:278.95px">Loy Kratong Phuket 2018</div>
<div class="lo" style="left:485.3px;top:313.1px">Location: Phuket, Mueang Phuket District,<br>Phuket, Thailand</div>
<div class="up" style="left:485.3px;top:325.0px">Uploaded: 22/11/2018 16:19:24</div>
<div class="up" style="left:485.3px;top:330.5px">Filmed: 22/11/2018</div>
<div class="bd free" style="left:560.6px;top:328.6px">FREE</div>
<div class="img" style="left:597px;top:214.1px;background:linear-gradient(180deg,#d6dade 0%,#ccd0d2 40%,#b8b2a8 58%,#a29a90 100%)"><div style="left:44%;top:0%;width:56%;height:74%;background:linear-gradient(90deg,#8a7a66 0%,#a08c74 30%,#c8b8a0 45%,#d0c2aa 60%,#bca27a 75%,#b89e76 100%);"></div><div style="left:46%;top:10%;width:18%;height:40%;background:#6e5e50;opacity:.7"></div><div style="left:68%;top:4%;width:14%;height:12%;background:#8a7a70;"></div><div style="left:68%;top:26%;width:14%;height:14%;background:#e6e2dc;"></div><div style="left:72%;top:46%;width:10%;height:12%;background:#5a4a40;"></div><div style="left:89%;top:2%;width:7%;height:12%;background:#5a6880;"></div><div style="left:89%;top:28%;width:7%;height:12%;background:#5a6a58;"></div><div style="left:88%;top:56%;width:8%;height:12%;background:#a86058;"></div><div style="left:0%;top:44%;width:16%;height:16%;background:#a8a298;"></div><div style="left:0;top:0;width:100%;height:100%;background:#e0d8cc;clip-path:polygon(0% 40%,42% 4%,45% 7%,3% 44%);"></div><div style="left:24%;top:0%;width:1.8%;height:82%;background:#5a4a40;"></div><div style="left:0%;top:58%;width:100%;height:42%;background:linear-gradient(180deg,#8a8276,#9a9288 45%,#b0a89e);"></div><div style="left:20%;top:40%;width:80%;height:45%;background:radial-gradient(ellipse 55% 50% at 50% 50%,rgba(60,60,50,.6),transparent 90%);"></div><div style="left:28%;top:41%;width:3.6%;height:48%;background:#4a4a3a;border-radius:40% 40% 10% 10%"></div><div style="left:28.6%;top:41%;width:2.4%;height:3.5%;background:#c03030;border-radius:50%"></div><div style="left:33%;top:43%;width:3.6%;height:45%;background:#3e4034;border-radius:40% 40% 10% 10%"></div><div style="left:38%;top:47%;width:3.6%;height:30%;background:#505040;border-radius:40% 40% 10% 10%"></div><div style="left:38.6%;top:47%;width:2.4%;height:3.5%;background:#c03030;border-radius:50%"></div><div style="left:42%;top:42%;width:3.6%;height:47%;background:#4a4a3a;border-radius:40% 40% 10% 10%"></div><div style="left:46%;top:41%;width:3.6%;height:45%;background:#505040;border-radius:40% 40% 10% 10%"></div><div style="left:46.6%;top:41%;width:2.4%;height:3.5%;background:#c03030;border-radius:50%"></div><div style="left:50%;top:44%;width:3.6%;height:34%;background:#4a4a3a;border-radius:40% 40% 10% 10%"></div><div style="left:54%;top:48%;width:3.6%;height:34%;background:#505040;border-radius:40% 40% 10% 10%"></div><div style="left:54.6%;top:48%;width:2.4%;height:3.5%;background:#c03030;border-radius:50%"></div><div style="left:58%;top:49%;width:3.6%;height:30%;background:#3e4034;border-radius:40% 40% 10% 10%"></div><div style="left:62%;top:40%;width:3.6%;height:48%;background:#3e4034;border-radius:40% 40% 10% 10%"></div><div style="left:62.6%;top:40%;width:2.4%;height:3.5%;background:#c03030;border-radius:50%"></div><div style="left:66%;top:42%;width:3.6%;height:30%;background:#34362e;border-radius:40% 40% 10% 10%"></div><div style="left:71%;top:45%;width:3.6%;height:42%;background:#505040;border-radius:40% 40% 10% 10%"></div><div style="left:71.6%;top:45%;width:2.4%;height:3.5%;background:#c03030;border-radius:50%"></div><div style="left:75%;top:44%;width:3.6%;height:48%;background:#505040;border-radius:40% 40% 10% 10%"></div><div style="left:80%;top:40%;width:3.6%;height:41%;background:#3e4034;border-radius:40% 40% 10% 10%"></div><div style="left:80.6%;top:40%;width:2.4%;height:3.5%;background:#c03030;border-radius:50%"></div><div style="left:86%;top:38%;width:3.6%;height:34%;background:#505040;border-radius:40% 40% 10% 10%"></div><div style="left:94%;top:41%;width:3.6%;height:38%;background:#505040;border-radius:40% 40% 10% 10%"></div><div style="left:94.6%;top:41%;width:2.4%;height:3.5%;background:#c03030;border-radius:50%"></div><div style="left:10%;top:88%;width:20%;height:12%;background:#3a3a40;opacity:.6"></div></div>
<div class="bl" style="left:596.2px;top:279.6px"></div>
<div class="ti" style="left:601.4px;top:278.95px">ВЗРЫВ В ЖИЛОМ ДОМЕ В<br>АЗЕРБАЙДЖАНЕ - 1.17<br>(20.11.2018)</div>
<div class="lo" style="left:601.3px;top:313.1px">Location: Гянджа, Azerbaijan</div>
<div class="up" style="left:601.3px;top:325.0px">Uploaded: 20/11/2018 0:00:0</div>
<div class="up" style="left:601.3px;top:330.5px">Filmed: 20/11/2018</div>
<div class="bd" style="left:676.6px;top:328.6px">1150</div>
<div class="img" style="left:133px;top:360.7px;background:linear-gradient(90deg,#7a6a6c 0%,#9a8884 40%,#a48e88 70%,#9c8682 100%)"><div style="left:0%;top:0%;width:100%;height:100%;background:repeating-linear-gradient(90deg,transparent 0,transparent 4px,rgba(60,40,40,.08) 4px,rgba(60,40,40,.08) 6px);"></div><div style="left:0;top:0;width:100%;height:100%;background:linear-gradient(90deg,#0c0e1c,#161828 60%,#22243a);clip-path:polygon(0% 0%,12% 0%,18% 20%,26% 40%,30% 55%,26% 80%,24% 100%,0% 100%);"></div><div style="left:17%;top:51%;width:21%;height:16%;background:linear-gradient(180deg,#e6d2ca,#cdb6ac);"></div><div style="left:20%;top:67%;width:18%;height:33%;background:repeating-linear-gradient(90deg,#3a2e30 0,#3a2e30 2px,#6a5a5a 2px,#6a5a5a 4px);opacity:.7"></div><div style="left:0;top:0;width:100%;height:100%;background:linear-gradient(180deg,#e8d6ce,#c8b0a6);clip-path:polygon(71% 48%,100% 50%,100% 72%,74% 70%);"></div><div style="left:74%;top:70%;width:26%;height:30%;background:#8a7676;"></div><div style="left:38%;top:37%;width:33%;height:63%;background:linear-gradient(90deg,#cfb8ae,#e6d4cc 25%,#e2cec6 70%,#c4aca2);"></div><div style="left:68%;top:37%;width:5%;height:63%;background:#b89c94;"></div><div style="left:46%;top:47%;width:17%;height:28%;background:#2a2228;clip-path:polygon(0% 10%,30% 30%,50% 15%,70% 30%,100% 10%,95% 60%,70% 70%,60% 100%,40% 100%,30% 70%,5% 60%)"></div><div style="left:52%;top:58%;width:5%;height:9%;background:#b03040;"></div><svg style="position:absolute;left:0;top:0" width="100%" height="100%" viewBox="0 0 100 60" preserveAspectRatio="none"><path d="M44 22 Q48 14 56 8" stroke="#1c1c1e" stroke-width="0.9" fill="none"/><circle cx="56" cy="8" r="1.1" fill="#1c1c1e"/><path d="M69 22 Q69 14 68 8" stroke="#1c1c1e" stroke-width="0.9" fill="none"/><circle cx="68" cy="8" r="1.1" fill="#1c1c1e"/></svg><div style="left:32%;top:93%;width:4%;height:7%;background:#c02030;border-radius:50%"></div></div>
<div class="bl" style="left:132.2px;top:426.2px"></div>
<div class="ti" style="left:137.4px;top:425.54999999999995px">Инаугурация в ДНР Пушилина<br>Д.А.</div>
<div class="img" style="left:249px;top:360.7px;background:linear-gradient(180deg,#08070c 0%,#0a090e 40%,#141418 70%,#202024 100%)"><div style="left:0%;top:0%;width:50%;height:42%;background:radial-gradient(ellipse at 10% 30%,rgba(120,60,170,.7),rgba(70,30,110,.35) 45%,transparent 75%);"></div><div style="left:0%;top:0%;width:40%;height:30%;background:repeating-linear-gradient(160deg,transparent 0,transparent 6px,rgba(140,80,190,.25) 6px,rgba(140,80,190,.25) 7px);"></div><div style="left:32%;top:8%;width:2%;height:22%;background:#d890a8;"></div><div style="left:0%;top:30%;width:100%;height:42%;background:linear-gradient(180deg,rgba(30,30,38,.7),rgba(20,20,24,.9));"></div><div style="left:14%;top:18%;width:11%;height:50%;background:#262630;border-radius:40% 40% 5% 5%"></div><div style="left:16%;top:18%;width:7%;height:10%;background:#5a5a6a;border-radius:50%"></div><div style="left:31%;top:53%;width:11%;height:35%;background:#9a2838;border-radius:40% 40% 5% 5%"></div><div style="left:47%;top:45%;width:8%;height:30%;background:#c8a828;border-radius:40% 40% 5% 5%"></div><div style="left:43%;top:35%;width:5%;height:10%;background:#dcdcdc;border-radius:50%;opacity:.7"></div><div style="left:62%;top:45%;width:17%;height:30%;background:#303a30;border-radius:40% 40% 5% 5%"></div><div style="left:89%;top:44%;width:8%;height:30%;background:#34343a;border-radius:40% 40% 5% 5%"></div><div style="left:0%;top:80%;width:100%;height:20%;background:linear-gradient(180deg,#3a3a3c,#55555a);"></div><div style="left:0%;top:67%;width:11%;height:33%;background:#cdb834;"></div><div style="left:34%;top:65%;width:13%;height:35%;background:#d4c038;"></div><div style="left:68%;top:63%;width:12%;height:37%;background:#d2be36;"></div><div style="left:11%;top:68%;width:23%;height:2%;background:#b8a42c;"></div><div style="left:47%;top:66%;width:21%;height:2%;background:#b8a42c;"></div><div style="left:80%;top:64%;width:20%;height:2%;background:#b8a42c;"></div><div style="left:16%;top:68%;width:1.4%;height:32%;background:#b8a42c;"></div><div style="left:22%;top:68%;width:1.4%;height:32%;background:#b8a42c;"></div><div style="left:27%;top:68%;width:1.4%;height:32%;background:#b8a42c;"></div><div style="left:52%;top:66%;width:1.4%;height:34%;background:#b8a42c;"></div><div style="left:58%;top:66%;width:1.4%;height:34%;background:#b8a42c;"></div><div style="left:63%;top:66%;width:1.4%;height:34%;background:#b8a42c;"></div><div style="left:84%;top:64%;width:1.4%;height:36%;background:#b8a42c;"></div><div style="left:90%;top:64%;width:1.4%;height:36%;background:#b8a42c;"></div><div style="left:95%;top:64%;width:1.4%;height:36%;background:#b8a42c;"></div></div>
<div class="bl" style="left:248.2px;top:426.2px"></div>
<div class="ti" style="left:253.4px;top:425.54999999999995px">Great salute on Independence day<br>of Latvia (hundred years of<br>independent Latvia).</div>
<div class="img" style="left:365px;top:360.7px;background:linear-gradient(180deg,#181818 0%,#1b1b1b 30%,#242424 55%,#202020 75%,#141414 86%,#101010 100%)"><div style="left:0%;top:25%;width:100%;height:50%;background:radial-gradient(ellipse 60% 50%,rgba(60,60,62,.5),transparent 80%);"></div><div style="left:8%;top:28%;width:6%;height:40%;background:#2a2a30;border-radius:40% 40% 0 0"></div><div style="left:18%;top:34%;width:5%;height:32%;background:#3a3a40;border-radius:40% 40% 0 0"></div><div style="left:24%;top:34%;width:5%;height:30%;background:#36363e;border-radius:40% 40% 0 0"></div><div style="left:30%;top:33%;width:5%;height:32%;background:#3e3e3e;border-radius:40% 40% 0 0"></div><div style="left:36%;top:33%;width:5%;height:28%;background:#323236;border-radius:40% 40% 0 0"></div><div style="left:44%;top:32%;width:5%;height:32%;background:#38383c;border-radius:40% 40% 0 0"></div><div style="left:50%;top:36%;width:5%;height:30%;background:#444;border-radius:40% 40% 0 0"></div><div style="left:56%;top:32%;width:5%;height:30%;background:#323236;border-radius:40% 40% 0 0"></div><div style="left:66%;top:32%;width:6%;height:35%;background:#3c3c40;border-radius:40% 40% 0 0"></div><div style="left:76%;top:34%;width:5%;height:30%;background:#303034;border-radius:40% 40% 0 0"></div><div style="left:86%;top:34%;width:6%;height:32%;background:#2e2e32;border-radius:40% 40% 0 0"></div><div style="left:32%;top:50%;width:7%;height:28%;background:#3a3e5a;"></div><div style="left:2%;top:62%;width:14%;height:22%;background:#0e0e0e;border-radius:50% 50% 0 0"></div><div style="left:38%;top:70%;width:8%;height:14%;background:#121212;border-radius:50% 50% 0 0"></div><div style="left:0%;top:80%;width:100%;height:6%;background:#2a2a2a;"></div><div style="left:calc(63% - 5px);top:calc(73% - 5px);width:10px;height:10px;border-radius:50%;background:radial-gradient(circle,#ff5a48 0,#ff5a48 30%,transparent 70%);"></div><div style="left:calc(70% - 3px);top:calc(38% - 3px);width:6px;height:6px;border-radius:50%;background:radial-gradient(circle,#e8f0e0 0,#e8f0e0 30%,transparent 70%);"></div><div style="left:calc(73% - 2.5px);top:calc(67% - 2.5px);width:5.0px;height:5.0px;border-radius:50%;background:radial-gradient(circle,#ff9050 0,#ff9050 30%,transparent 70%);"></div></div>
<div class="bl" style="left:364.2px;top:426.2px"></div>
<div class="ti" style="left:369.4px;top:425.54999999999995px">IEMASSIVE Event Racers Shut<br>down Hwy 60 West Doing Donuts,<br>Man Walking in East Lanes Almost<br>Run Over</div>
<div class="img" style="left:481px;top:360.7px;background:linear-gradient(180deg,#0a1622 0%,#13283a 22%,#1e3c4c 45%,#1c3240 62%,#181a1e 80%,#141414 100%)"><div style="left:55%;top:12%;width:45%;height:55%;background:radial-gradient(ellipse,rgba(80,140,160,.5),transparent 70%);"></div><div style="left:0%;top:0%;width:100%;height:12%;background:#0a121a;opacity:.6"></div><div style="left:calc(45% - 2px);top:calc(6% - 2px);width:4px;height:4px;border-radius:50%;background:radial-gradient(circle,#a0d8f0 0,#a0d8f0 30%,transparent 70%);"></div><div style="left:calc(87% - 2px);top:calc(25% - 2px);width:4px;height:4px;border-radius:50%;background:radial-gradient(circle,#c0e8f8 0,#c0e8f8 30%,transparent 70%);"></div><div style="left:calc(18% - 2px);top:calc(33% - 2px);width:4px;height:4px;border-radius:50%;background:radial-gradient(circle,#c0e8f8 0,#c0e8f8 30%,transparent 70%);"></div><div style="left:calc(25% - 2px);top:calc(40% - 2px);width:4px;height:4px;border-radius:50%;background:radial-gradient(circle,#d0f0f8 0,#d0f0f8 30%,transparent 70%);"></div><div style="left:calc(3% - 2px);top:calc(37% - 2px);width:4px;height:4px;border-radius:50%;background:radial-gradient(circle,#ff7050 0,#ff7050 30%,transparent 70%);"></div><div style="left:calc(70% - 1.5px);top:calc(38% - 1.5px);width:3.0px;height:3.0px;border-radius:50%;background:radial-gradient(circle,#b0e0f0 0,#b0e0f0 30%,transparent 70%);"></div><div style="left:0%;top:58%;width:32%;height:42%;background:#24160f;opacity:.8;filter:blur(2px)"></div><div style="left:62%;top:55%;width:38%;height:30%;background:#1a1c1e;opacity:.6;filter:blur(2px)"></div><div style="left:29%;top:14%;width:40%;height:40%;background:#5a3422;border-radius:50%;filter:blur(1.5px)"></div><div style="left:33%;top:22%;width:32%;height:76%;background:radial-gradient(ellipse at 50% 40%,#e08058 0,#c86848 35%,#9a4a30 65%,#5a2c1c 100%);border-radius:45% 45% 35% 35%;filter:blur(1px)"></div><div style="left:38%;top:44%;width:22%;height:7%;background:#4a2a1e;opacity:.5;border-radius:40%;filter:blur(.8px)"></div><div style="left:18%;top:44%;width:18%;height:54%;background:radial-gradient(ellipse at 50% 40%,#d87048,#b0502e 50%,#7a3a20 80%,transparent 100%);border-radius:40%;filter:blur(1px)"></div><div style="left:78%;top:50%;width:6%;height:30%;background:#d8c8b8;border-radius:30%;filter:blur(.6px)"></div><div style="left:0%;top:86%;width:100%;height:14%;background:#140f0c;opacity:.55"></div><div style="left:12%;top:74%;width:80%;font-family:'Liberation Sans',sans-serif;font-size:4px;line-height:6.5px;color:#fff;text-align:center;white-space:nowrap">10.30 вечера, но Пхукет Таун сегодня<br>спать не собирается.</div></div>
<div class="bl" style="left:480.2px;top:426.2px"></div>
<div class="ti" style="left:485.4px;top:425.54999999999995px">Праздник как война.<br>Вегетарианский фестиваль на<br>Пхукете 2018</div>
<div class="img" style="left:597px;top:360.7px;background:linear-gradient(180deg,#040303 0%,#060404 35%,#1a120a 50%,#2a1c10 85%,#1a1410 100%)"><div style="left:0;top:0;width:100%;height:100%;background:linear-gradient(180deg,#b08048,#c89050 40%,#8a6038);clip-path:polygon(60% 40%,100% 46%,100% 85%,60% 85%);"></div><div style="left:0;top:0;width:100%;height:100%;background:linear-gradient(180deg,#8a6a4a,#b08050 50%,#7a5030);clip-path:polygon(28% 44%,60% 38%,60% 85%,28% 85%);"></div><div style="left:60%;top:50%;width:40%;height:28%;background:repeating-linear-gradient(180deg,transparent 0,transparent 4px,rgba(60,40,20,.35) 4px,rgba(60,40,20,.35) 6px);"></div><div style="left:3%;top:40%;width:22%;height:45%;background:linear-gradient(180deg,#2a2620,#3e3628);"></div><div style="left:0%;top:80%;width:100%;height:20%;background:linear-gradient(180deg,#3a2a1c,#1c140e);"></div><div style="left:40%;top:34%;width:22%;height:20%;background:radial-gradient(ellipse 50% 40%,#f0f0e8 0,#f0f0e8 15%,#3a58a8 30%,#e8e0d8 45%,#c83038 62%,transparent 75%);"></div><div style="left:36%;top:20%;width:26%;height:16%;background:repeating-linear-gradient(80deg,transparent 0,transparent 3px,rgba(150,60,60,.6) 3px,rgba(150,60,60,.6) 4px);border-radius:50% 50% 0 0;opacity:.6"></div><div style="left:48%;top:55%;width:5%;height:42%;background:linear-gradient(180deg,#c090a8,#f8f0f8);"></div><div style="left:38%;top:92%;width:28%;height:8%;background:#e080c0;border-radius:50%"></div><div style="left:calc(9% - 4px);top:calc(35% - 4px);width:8px;height:8px;border-radius:50%;background:radial-gradient(circle,#ffc060 0,#ffc060 30%,transparent 70%);"></div><div style="left:calc(88% - 3px);top:calc(46% - 3px);width:6px;height:6px;border-radius:50%;background:radial-gradient(circle,#ffd070 0,#ffd070 30%,transparent 70%);"></div><div style="left:calc(8% - 2.5px);top:calc(49% - 2.5px);width:5.0px;height:5.0px;border-radius:50%;background:radial-gradient(circle,#ffc060 0,#ffc060 30%,transparent 70%);"></div><div style="left:15%;top:72%;width:4%;height:18%;background:#141414;"></div><div style="left:30%;top:72%;width:4%;height:20%;background:#141414;"></div><div style="left:38%;top:74%;width:4%;height:22%;background:#181818;"></div><div style="left:68%;top:74%;width:4%;height:22%;background:#181818;"></div></div>
<div class="bl" style="left:596.2px;top:426.2px"></div>
<div class="ti" style="left:601.4px;top:425.54999999999995px">Festival of light in Riga. 2018 /<br>Фестиваль света в Риге. 2018</div>
</div>
</body></html>
